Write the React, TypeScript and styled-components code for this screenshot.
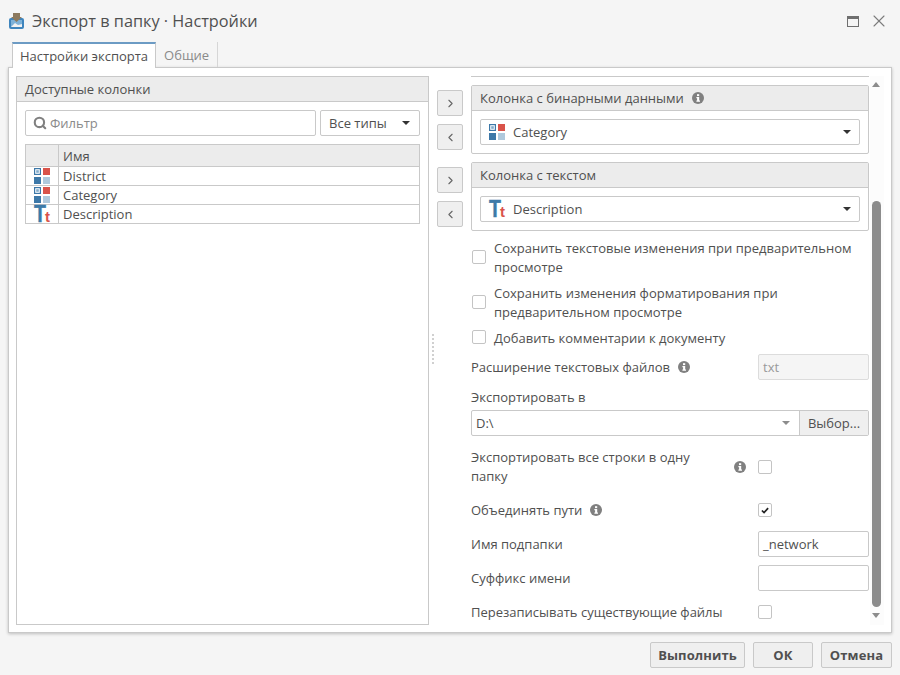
import React from 'react';
import styled, { createGlobalStyle } from 'styled-components';
import { ChevronLeft, ChevronRight, Search, X } from 'lucide-react';

const GlobalStyle = createGlobalStyle`
  html, body {
    margin: 0;
    padding: 0;
    width: 900px;
    height: 675px;
    overflow: hidden;
    background: #f5f5f5;
  }
  * {
    box-sizing: border-box;
  }
`;

const line = '#c9c9c9';
const ink = '#505050';

const Dialog = styled.div`
  width: 900px;
  height: 675px;
  display: flex;
  flex-direction: column;
  background: #f5f5f5;
  font-family: 'Open Sans', 'Noto Sans', sans-serif;
  font-size: 13px;
  color: ${ink};
`;

const TitleBar = styled.div`
  height: 42px;
  padding: 0 14px 0 8px;
  display: flex;
  align-items: center;
`;

const Title = styled.div`
  margin-left: 7px;
  flex: 1;
  font-size: 16.3px;
  color: #505050;
`;

const WindowButton = styled.div`
  width: 14px;
  height: 14px;
  margin-left: 12px;
  display: flex;
  align-items: center;
  justify-content: center;
  color: #7b7b7b;
  svg {
    flex: none;
  }
`;

const MaximizeBox = styled.div`
  width: 12px;
  height: 11px;
  flex: none;
  border: 1.5px solid #6f6f6f;
  border-top-width: 3px;
`;

const TabStrip = styled.div`
  height: 26px;
  padding-left: 12px;
  display: flex;
  position: relative;
  z-index: 1;
`;

const Tab = styled.div<{ $active?: boolean }>`
  height: ${(p) => (p.$active ? '26px' : '25px')};
  padding: 0 ${(p) => (p.$active ? '7px' : '8px')};
  display: flex;
  align-items: center;
  background: ${(p) => (p.$active ? '#ffffff' : 'transparent')};
  border-top: ${(p) => (p.$active ? '2px solid #6c9bc4' : 'none')};
  border-left: ${(p) => (p.$active ? `1px solid ${line}` : 'none')};
  border-right: 1px solid ${(p) => (p.$active ? line : '#d6d6d6')};
  color: ${(p) => (p.$active ? ink : '#8a8a8a')};
`;

const Sheet = styled.div`
  margin: -1px 8px 0;
  height: 566px;
  padding: 8px 7px 7px;
  display: flex;
  background: #ffffff;
  border: 1px solid ${line};
  box-shadow: 0 1px 3px rgba(0, 0, 0, 0.22);
`;

const LeftPanel = styled.div`
  width: 413px;
  height: 549px;
  flex: none;
  border: 1px solid ${line};
`;

const PanelHeader = styled.div`
  height: 25px;
  padding-left: 8px;
  display: flex;
  align-items: center;
  background: #ececec;
  border-bottom: 1px solid ${line};
`;

const FilterRow = styled.div`
  margin: 8px;
  display: flex;
  gap: 4px;
`;

const FilterBox = styled.div`
  width: 291px;
  height: 26px;
  padding-left: 7px;
  display: flex;
  align-items: center;
  gap: 3px;
  border: 1px solid ${line};
  border-radius: 2px;
  color: #8a8a8a;
`;

const TypeSelect = styled.div`
  width: 100px;
  height: 26px;
  padding: 0 9px 0 8px;
  display: flex;
  align-items: center;
  justify-content: space-between;
  border: 1px solid ${line};
  border-radius: 2px;
`;

const Caret = styled.span<{ $muted?: boolean }>`
  width: 0;
  height: 0;
  flex: none;
  border-left: 4px solid transparent;
  border-right: 4px solid transparent;
  border-top: 4px solid ${(p) => (p.$muted ? '#8c8c8c' : '#333333')};
`;

const ColumnsTable = styled.div`
  margin: 0 8px;
  width: 395px;
  display: grid;
  grid-template-columns: 32px 1fr;
  grid-template-rows: 22px repeat(3, 19px);
  border: 1px solid ${line};
  border-bottom: none;
`;

const HeadCell = styled.div`
  padding-left: 4px;
  display: flex;
  align-items: center;
  background: #ececec;
  border-bottom: 1px solid ${line};
  & + & {
    border-left: 1px solid ${line};
  }
`;

const IconCell = styled.div`
  display: flex;
  align-items: center;
  justify-content: center;
  border-bottom: 1px solid ${line};
`;

const NameCell = styled.div`
  padding-left: 4px;
  display: flex;
  align-items: center;
  border-left: 1px solid ${line};
  border-bottom: 1px solid ${line};
`;

const Splitter = styled.div`
  width: 8px;
  flex: none;
  display: flex;
  flex-direction: column;
  align-items: center;
  justify-content: center;
  gap: 2px;
  padding: 0 0 3px;
`;

const GripDot = styled.span`
  width: 2px;
  height: 2px;
  background: #d0d0d0;
`;

const MoveColumn = styled.div`
  width: 26px;
  padding-top: 14px;
  flex: none;
  display: flex;
  flex-direction: column;
`;

const MoveButton = styled.div<{ $gap: number }>`
  width: 26px;
  height: 26px;
  margin-bottom: ${(p) => p.$gap}px;
  display: flex;
  align-items: center;
  justify-content: center;
  background: #efefef;
  border: 1px solid ${line};
  border-radius: 2px;
  color: #666666;
`;

const RightPanel = styled.div`
  width: 398px;
  margin-left: 8px;
  flex: none;
  border-top: 1px solid ${line};
  padding-top: 8px;
`;

const Group = styled.div<{ $gap: number }>`
  height: 69px;
  margin-bottom: ${(p) => p.$gap}px;
  border: 1px solid ${line};
  border-radius: 2px;
`;

const GroupHeader = styled(PanelHeader)`
  gap: 8px;
`;

const GroupBody = styled.div`
  padding: 8px;
`;

const ColumnCombo = styled.div`
  height: 26px;
  padding: 0 8px;
  display: flex;
  align-items: center;
  border: 1px solid ${line};
  border-radius: 2px;
`;

const ComboText = styled.span`
  margin-left: 8px;
  flex: 1;
`;

const CheckRow = styled.div<{ $height: number }>`
  height: ${(p) => p.$height}px;
  padding-left: 1px;
  display: flex;
  align-items: center;
  gap: 8px;
  line-height: 19px;
`;

const CheckLabel = styled.div`
  width: 365px;
`;

const Check = styled.span`
  width: 14px;
  height: 14px;
  flex: none;
  display: flex;
  align-items: center;
  justify-content: center;
  background: #ffffff;
  border: 1px solid #c4c4c4;
  border-radius: 2px;
`;

const LeadCheck = styled(Check)`
  margin-bottom: 2px;
`;

const FieldRow = styled.div<{ $height: number; $top?: number }>`
  height: ${(p) => p.$height}px;
  margin-top: ${(p) => p.$top || 0}px;
  display: grid;
  grid-template-columns: 287px 111px;
  align-items: center;
`;

const FieldLabel = styled.div`
  display: flex;
  align-items: center;
  gap: 8px;
  line-height: 19px;
`;

const WrapLabel = styled(FieldLabel)`
  padding-right: 12px;
  justify-content: space-between;
`;

const WrapText = styled.div`
  width: 250px;
  flex: none;
`;

const TextField = styled.div<{ $disabled?: boolean }>`
  height: 26px;
  padding-left: 4px;
  display: flex;
  align-items: center;
  background: ${(p) => (p.$disabled ? '#f5f5f5' : '#ffffff')};
  color: ${(p) => (p.$disabled ? '#9a9a9a' : ink)};
  border: 1px solid ${(p) => (p.$disabled ? '#dcdcdc' : line)};
  border-radius: 2px;
`;

const PlainLabel = styled.div`
  height: 26px;
  margin-top: 4px;
  display: flex;
  align-items: center;
`;

const PathCombo = styled.div`
  height: 26px;
  display: flex;
  border: 1px solid ${line};
  border-radius: 2px;
`;

const PathValue = styled.div`
  flex: 1;
  padding: 0 9px 0 4px;
  display: flex;
  align-items: center;
  justify-content: space-between;
`;

const BrowseButton = styled.div`
  width: 69px;
  display: flex;
  align-items: center;
  justify-content: center;
  background: #efefef;
  border-left: 1px solid ${line};
`;

const ScrollTrack = styled.div`
  width: 14px;
  height: 549px;
  margin-left: 1px;
  padding-left: 2px;
  flex: none;
  display: flex;
  flex-direction: column;
  align-items: flex-start;
  background: #fcfcfc;
`;

const ArrowUp = styled.span`
  margin-top: 6px;
  border-left: 4.5px solid transparent;
  border-right: 4.5px solid transparent;
  border-bottom: 5px solid #8c8c8c;
`;

const ArrowDown = styled.span`
  margin-top: 6px;
  border-left: 4.5px solid transparent;
  border-right: 4.5px solid transparent;
  border-top: 5px solid #8c8c8c;
`;

const ScrollThumb = styled.div`
  width: 9px;
  height: 406px;
  margin-top: 114px;
  background: #8c8c8c;
  border-radius: 5px;
`;

const Footer = styled.div`
  flex: 1;
  padding: 9px 8px 0;
  display: flex;
  justify-content: flex-end;
  align-items: flex-start;
  gap: 8px;
`;

const FooterButton = styled.div<{ $width: number }>`
  width: ${(p) => p.$width}px;
  height: 26px;
  display: flex;
  align-items: center;
  justify-content: center;
  background: #efefef;
  border: 1px solid ${line};
  border-radius: 2px;
  font-weight: 700;
  letter-spacing: 0.1px;
`;

const TypeGlyph = styled.span`
  width: 16px;
  height: 17px;
  flex: none;
  position: relative;
  display: block;
  font-family: 'Liberation Sans', sans-serif;
  font-weight: 700;
`;

const BigT = styled.span`
  position: absolute;
  left: 0;
  top: -1px;
  font-size: 23px;
  line-height: 18px;
  color: #3d7aa8;
  -webkit-text-stroke: 0.4px #3d7aa8;
  transform: scaleX(0.85);
  transform-origin: left center;
`;

const SmallT = styled.span`
  position: absolute;
  left: 11px;
  top: 5px;
  font-size: 15px;
  line-height: 12px;
  color: #d9534a;
`;

const AppIcon = () => (
  <svg width="17" height="18" viewBox="0 0 17 18">
    <rect x="1" y="6" width="15" height="11" rx="2" fill="#3f85bd" />
    <rect x="3" y="8" width="11" height="7" fill="#7fb2d8" />
    <path d="M3 15 L7 11 L10 13 L14 12 L14 15 Z" fill="#f2f2f2" />
    <path d="M5 1 H12 V5 H14 L8.5 10 L3 5 H5 Z" fill="#8d7a5e" />
  </svg>
);

const CategoryIcon = () => (
  <svg width="16" height="16" viewBox="0 0 16 16">
    <rect x="0.6" y="0.6" width="5.8" height="5.8" fill="#ffffff" stroke="#3d78a8" strokeWidth="1.2" />
    <rect x="2.2" y="2.2" width="2.6" height="2.6" fill="#7eaacb" />
    <rect x="9" y="0" width="7" height="7" fill="#d9534a" />
    <rect x="0" y="9" width="7" height="7" fill="#3d78a8" />
    <rect x="9" y="9" width="7" height="7" fill="#afc9dd" />
  </svg>
);

const TextIcon = () => (
  <TypeGlyph>
    <BigT>T</BigT>
    <SmallT>t</SmallT>
  </TypeGlyph>
);

const Info = () => (
  <svg width="12" height="12" viewBox="0 0 12 12">
    <circle cx="6" cy="6" r="6" fill="#808080" />
    <rect x="5" y="2.2" width="2.2" height="1.9" fill="#ffffff" />
    <path d="M4.4 5 H7.2 V8.6 H8 V9.8 H4.4 V8.6 H5.1 V6.2 H4.4 Z" fill="#ffffff" />
  </svg>
);

const Tick = () => (
  <svg width="8" height="7" viewBox="0 0 10 9">
    <path d="M1 4.5 L3.8 7.2 L9 1.5" fill="none" stroke="#222222" strokeWidth="2.2" />
  </svg>
);

const rows = [
  { name: 'District', icon: <CategoryIcon /> },
  { name: 'Category', icon: <CategoryIcon /> },
  { name: 'Description', icon: <TextIcon /> },
];

const moves = [
  { icon: <ChevronRight size={13} />, gap: 8 },
  { icon: <ChevronLeft size={13} />, gap: 17 },
  { icon: <ChevronRight size={13} />, gap: 8 },
  { icon: <ChevronLeft size={13} />, gap: 0 },
];

export default function App() {
  return (
    <>
      <GlobalStyle />
      <Dialog>
        <TitleBar>
          <AppIcon />
          <Title>Экспорт в папку · Настройки</Title>
          <WindowButton>
            <MaximizeBox />
          </WindowButton>
          <WindowButton>
            <X size={20} strokeWidth={1.3} />
          </WindowButton>
        </TitleBar>
        <TabStrip>
          <Tab $active>Настройки экспорта</Tab>
          <Tab>Общие</Tab>
        </TabStrip>
        <Sheet>
          <LeftPanel>
            <PanelHeader>Доступные колонки</PanelHeader>
            <FilterRow>
              <FilterBox>
                <Search size={14} strokeWidth={3.6} color="#808080" />
                Фильтр
              </FilterBox>
              <TypeSelect>
                Все типы
                <Caret />
              </TypeSelect>
            </FilterRow>
            <ColumnsTable>
              <HeadCell />
              <HeadCell>Имя</HeadCell>
              {rows.map((row) => (
                <React.Fragment key={row.name}>
                  <IconCell>{row.icon}</IconCell>
                  <NameCell>{row.name}</NameCell>
                </React.Fragment>
              ))}
            </ColumnsTable>
          </LeftPanel>
          <Splitter>
            {Array.from({ length: 8 }).map((_, i) => (
              <GripDot key={i} />
            ))}
          </Splitter>
          <MoveColumn>
            {moves.map((move, i) => (
              <MoveButton key={i} $gap={move.gap}>
                {move.icon}
              </MoveButton>
            ))}
          </MoveColumn>
          <RightPanel>
            <Group $gap={8}>
              <GroupHeader>
                Колонка с бинарными данными
                <Info />
              </GroupHeader>
              <GroupBody>
                <ColumnCombo>
                  <CategoryIcon />
                  <ComboText>Category</ComboText>
                  <Caret />
                </ColumnCombo>
              </GroupBody>
            </Group>
            <Group $gap={4}>
              <GroupHeader>Колонка с текстом</GroupHeader>
              <GroupBody>
                <ColumnCombo>
                  <TextIcon />
                  <ComboText>Description</ComboText>
                  <Caret />
                </ColumnCombo>
              </GroupBody>
            </Group>
            <CheckRow $height={45}>
              <LeadCheck />
              <CheckLabel>Сохранить текстовые изменения при предварительном просмотре</CheckLabel>
            </CheckRow>
            <CheckRow $height={45}>
              <LeadCheck />
              <CheckLabel>Сохранить изменения форматирования при предварительном просмотре</CheckLabel>
            </CheckRow>
            <CheckRow $height={26}>
              <LeadCheck />
              <CheckLabel>Добавить комментарии к документу</CheckLabel>
            </CheckRow>
            <FieldRow $height={26} $top={3}>
              <FieldLabel>
                Расширение текстовых файлов
                <Info />
              </FieldLabel>
              <TextField $disabled>txt</TextField>
            </FieldRow>
            <PlainLabel>Экспортировать в</PlainLabel>
            <PathCombo>
              <PathValue>
                D:\
                <Caret $muted />
              </PathValue>
              <BrowseButton>Выбор...</BrowseButton>
            </PathCombo>
            <FieldRow $height={42} $top={10}>
              <WrapLabel>
                <WrapText>Экспортировать все строки в одну папку</WrapText>
                <Info />
              </WrapLabel>
              <Check />
            </FieldRow>
            <FieldRow $height={26} $top={9}>
              <FieldLabel>
                Объединять пути
                <Info />
              </FieldLabel>
              <Check>
                <Tick />
              </Check>
            </FieldRow>
            <FieldRow $height={26} $top={8}>
              <FieldLabel>Имя подпапки</FieldLabel>
              <TextField>_network</TextField>
            </FieldRow>
            <FieldRow $height={26} $top={8}>
              <FieldLabel>Суффикс имени</FieldLabel>
              <TextField />
            </FieldRow>
            <FieldRow $height={26} $top={8}>
              <FieldLabel>Перезаписывать существующие файлы</FieldLabel>
              <Check />
            </FieldRow>
          </RightPanel>
          <ScrollTrack>
            <ArrowUp />
            <ScrollThumb />
            <ArrowDown />
          </ScrollTrack>
        </Sheet>
        <Footer>
          <FooterButton $width={95}>Выполнить</FooterButton>
          <FooterButton $width={60}>ОК</FooterButton>
          <FooterButton $width={71}>Отмена</FooterButton>
        </Footer>
      </Dialog>
    </>
  );
}
